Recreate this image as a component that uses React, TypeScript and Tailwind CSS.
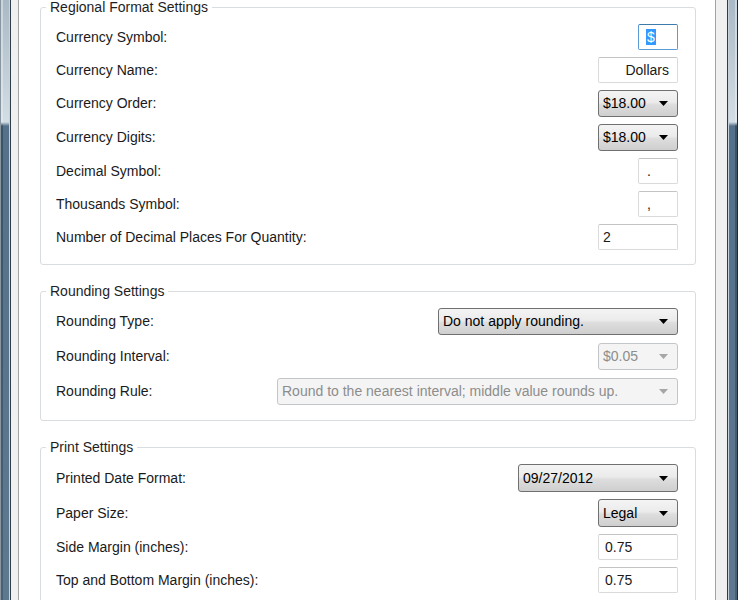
import React from "react";

const font = { fontFamily: '"Liberation Sans", Arial, sans-serif' };

function Arrow({ disabled }: { disabled?: boolean }) {
  return (
    <svg width="9" height="5" viewBox="0 0 9 5" className="shrink-0">
      <path d="M0 0H9L4.5 5Z" fill={disabled ? "#a6a6a6" : "#000"} />
    </svg>
  );
}

function Combo({
  value,
  w,
  disabled,
  h = "h-[27px]",
}: {
  value: string;
  w: string;
  disabled?: boolean;
  h?: string;
}) {
  return (
    <div
      className={
        disabled
          ? `${w} ${h} flex items-center justify-between rounded-[3px] border border-[#c3c6c9] bg-[#f4f4f4] pl-[4px] pr-[9px] text-[#8d8d8d]`
          : `${w} ${h} flex items-center justify-between rounded-[3px] border border-[#707070] bg-[linear-gradient(to_bottom,#f4f4f4_0%,#ebebeb_45%,#dddddd_55%,#cfcfcf_100%)] pl-[4px] pr-[9px] text-black`
      }
    >
      <span className="whitespace-nowrap">{value}</span>
      <Arrow disabled={disabled} />
    </div>
  );
}

function TextBox({
  value,
  w,
  pad,
}: {
  value: string;
  w: string;
  pad: string;
}) {
  return (
    <div
      className={`${w} ${pad} h-[26px] flex items-center rounded-[2px] border border-[#dadada] border-t-[#c4c4c4] bg-white`}
    >
      <span>{value}</span>
    </div>
  );
}

function Row({ label, children, h }: { label: string; children: React.ReactNode; h?: string }) {
  return (
    <div className={`flex items-center justify-between ${h ?? "h-[26px]"}`}>
      <span className="whitespace-nowrap">{label}</span>
      {children}
    </div>
  );
}

function Group({
  title,
  children,
  className,
}: {
  title: string;
  children: React.ReactNode;
  className?: string;
}) {
  return (
    <fieldset className={`rounded-[3px] border border-[#d9dde0] ${className ?? ""}`}>
      <legend className="ml-[5px] px-[4px] text-[14px] leading-[14px] text-[#1e1e1e]">{title}</legend>
      {children}
    </fieldset>
  );
}

export default function App() {
  return (
    <div className="flex h-[600px] w-[738px] overflow-hidden text-[14px] text-[#1a1a1a]" style={font}>
      {/* left window frame */}
      <div className="w-[1px] bg-[#8896a1]" />
      <div className="w-[2px] bg-[linear-gradient(to_bottom,#c9d4dc_0px,#dfe7ec_122px,#3c5366_126px,#4a6175_600px)]" />
      <div className="w-[6px] bg-[linear-gradient(to_bottom,#a9b9c5_0px,#d3dde4_122px,#55708a_126px,#5d788f_600px)]" />
      <div className="w-[1px] bg-[#c6d3dc]" />
      <div className="w-[1px] bg-[#2f3d48]" />
      <div className="w-[7px] bg-[#f0f0f0]" />
      <div className="w-[1px] bg-[#a3a3a3]" />

      {/* content */}
      <div className="flex flex-1 flex-col bg-white pl-[21px] pr-[19px]">
        <Group title="Regional Format Settings" className="pb-[14px]">
          <div className="flex flex-col gap-[7px] pl-[15px] pr-[17px] pt-[10px]">
            <Row label="Currency Symbol:">
              <div className="flex h-[26px] w-[40px] items-center rounded-[2px] border border-[#5b9bd5] border-t-[#3d7bad] bg-white pl-[7px]">
                <span className="bg-[#3399ff] px-[1px] leading-[16px] text-white">$</span>
              </div>
            </Row>
            <Row label="Currency Name:">
              <TextBox value="Dollars" w="w-[80px] justify-end" pad="pr-[8px]" />
            </Row>
            <Row label="Currency Order:" h="h-[27px]">
              <Combo value="$18.00" w="w-[80px]" />
            </Row>
            <Row label="Currency Digits:" h="h-[27px]">
              <Combo value="$18.00" w="w-[80px]" />
            </Row>
            <Row label="Decimal Symbol:">
              <TextBox value="." w="w-[40px]" pad="pl-[8px]" />
            </Row>
            <Row label="Thousands Symbol:">
              <TextBox value="," w="w-[40px]" pad="pl-[8px]" />
            </Row>
            <Row label="Number of Decimal Places For Quantity:">
              <TextBox value="2" w="w-[80px]" pad="pl-[4px]" />
            </Row>
          </div>
        </Group>

        <Group title="Rounding Settings" className="mt-[19px] pb-[15px]">
          <div className="flex flex-col gap-[8px] pl-[15px] pr-[17px] pt-[10px]">
            <Row label="Rounding Type:" h="h-[27px]">
              <Combo value="Do not apply rounding." w="w-[240px]" />
            </Row>
            <Row label="Rounding Interval:" h="h-[27px]">
              <Combo value="$0.05" w="w-[80px]" disabled />
            </Row>
            <Row label="Rounding Rule:" h="h-[27px]">
              <Combo value="Round to the nearest interval; middle value rounds up." w="w-[401px]" disabled />
            </Row>
          </div>
        </Group>

        <Group title="Print Settings" className="mt-[19px] pb-[15px]">
          <div className="flex flex-col gap-[7px] pl-[15px] pr-[17px] pt-[10px]">
            <Row label="Printed Date Format:" h="h-[28px]">
              <Combo value="09/27/2012" w="w-[160px]" h="h-[28px]" />
            </Row>
            <Row label="Paper Size:" h="h-[28px]">
              <Combo value="Legal" w="w-[80px]" h="h-[28px]" />
            </Row>
            <Row label="Side Margin (inches):">
              <TextBox value="0.75" w="w-[80px]" pad="pl-[6px]" />
            </Row>
            <Row label="Top and Bottom Margin (inches):">
              <TextBox value="0.75" w="w-[80px]" pad="pl-[6px]" />
            </Row>
          </div>
        </Group>
      </div>

      {/* right window frame */}
      <div className="w-[1px] bg-[#a3a3a3]" />
      <div className="w-[11px] bg-[#f0f0f0]" />
      <div className="w-[1px] bg-[#2f3d48]" />
      <div className="w-[1px] bg-[#c6d3dc]" />
      <div className="w-[6px] bg-[linear-gradient(to_bottom,#a9b9c5_0px,#d3dde4_122px,#55708a_126px,#5d788f_600px)]" />
      <div className="w-[2px] bg-[linear-gradient(to_bottom,#c9d4dc_0px,#dfe7ec_122px,#3c5366_126px,#4a6175_600px)]" />
      <div className="w-[1px] bg-[#1f2a33]" />
    </div>
  );
}
